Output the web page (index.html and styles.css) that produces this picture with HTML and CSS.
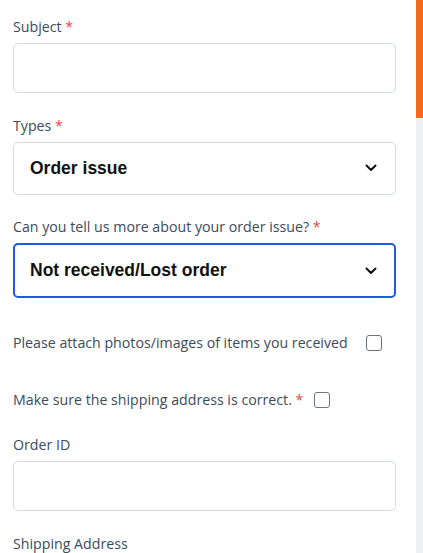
FILE: index.html
```html
<!DOCTYPE html>
<html>
<head>
<meta charset="utf-8">
<link rel="stylesheet" href="styles.css">
</head>
<body>
<div class="page">
  <form class="form">
    <div class="field">
      <label class="label">Subject <span class="req">*</span></label>
      <div class="input"></div>
    </div>
    <div class="field">
      <label class="label">Types <span class="req">*</span></label>
      <div class="select">
        <span class="select-text">Order issue</span>
        <svg class="chev" width="12" height="8" viewBox="0 0 12 8"><path d="M1.5 1.5 L6 6 L10.5 1.5" fill="none" stroke="#111" stroke-width="2" stroke-linecap="round" stroke-linejoin="round"/></svg>
      </div>
    </div>
    <div class="field">
      <label class="label">Can you tell us more about your order issue? <span class="req">*</span></label>
      <div class="select focused">
        <span class="select-text">Not received/Lost order</span>
        <svg class="chev" width="12" height="8" viewBox="0 0 12 8"><path d="M1.5 1.5 L6 6 L10.5 1.5" fill="none" stroke="#111" stroke-width="2" stroke-linecap="round" stroke-linejoin="round"/></svg>
      </div>
    </div>
    <div class="check-row first">
      <span class="label">Please attach photos/images of items you received</span>
      <span class="checkbox wide"></span>
    </div>
    <div class="check-row second">
      <span class="label">Make sure the shipping address is correct. <span class="req">*</span></span>
      <span class="checkbox"></span>
    </div>
    <div class="field order">
      <label class="label">Order ID</label>
      <div class="input"></div>
    </div>
    <div class="field">
      <label class="label">Shipping Address</label>
    </div>
  </form>
  <div class="scrollbar"><div class="thumb"></div></div>
</div>
</body>
</html>
```
FILE: styles.css
```css
html, body {
  margin: 0;
  padding: 0;
  background: #ffffff;
}
.page {
  display: flex;
  width: 423px;
  height: 553px;
  overflow: hidden;
}
.form {
  flex: 1;
  padding: 17px 0 0 13px;
  box-sizing: border-box;
}
.field {
  display: flex;
  flex-direction: column;
  width: 383px;
  margin-bottom: 22.5px;
}
.label {
  font-family: "Open Sans", "Liberation Sans", sans-serif;
  font-size: 14.2px;
  line-height: 20px;
  color: #3a4b5c;
}
.req {
  color: #e5484d;
}
.field .label {
  margin-bottom: 6px;
}
.input {
  height: 50px;
  box-sizing: border-box;
  border: 1px solid #d3dbe3;
  border-radius: 5px;
  background: #fff;
}
.select {
  height: 53px;
  box-sizing: border-box;
  border: 1px solid #d3dbe3;
  border-radius: 5px;
  display: flex;
  align-items: center;
  justify-content: space-between;
  padding: 0 18px 0 16px;
}
.select.focused {
  height: 55px;
  border: 2px solid #1b5ddb;
  padding: 0 17px 0 15px;
}
.select-text {
  font-family: "Liberation Sans", Arial, sans-serif;
  font-weight: bold;
  font-size: 17.5px;
  color: #111;
}
.chev {
  display: block;
}
.check-row {
  display: flex;
  align-items: center;
  height: 20px;
}
.check-row.first {
  margin-top: 35px;
}
.check-row.second {
  margin-top: 37px;
}
.checkbox {
  width: 16px;
  height: 16px;
  box-sizing: border-box;
  border: 1.5px solid #6b7280;
  border-radius: 3px;
  margin-left: 11px;
  flex: none;
}
.checkbox.wide {
  margin-left: 18px;
}
.field.order {
  margin-top: 25px;
}
.scrollbar {
  width: 7px;
  height: 553px;
  background: #eef1f4;
  flex: none;
}
.thumb {
  height: 118px;
  background: #f26a1b;
}
```
